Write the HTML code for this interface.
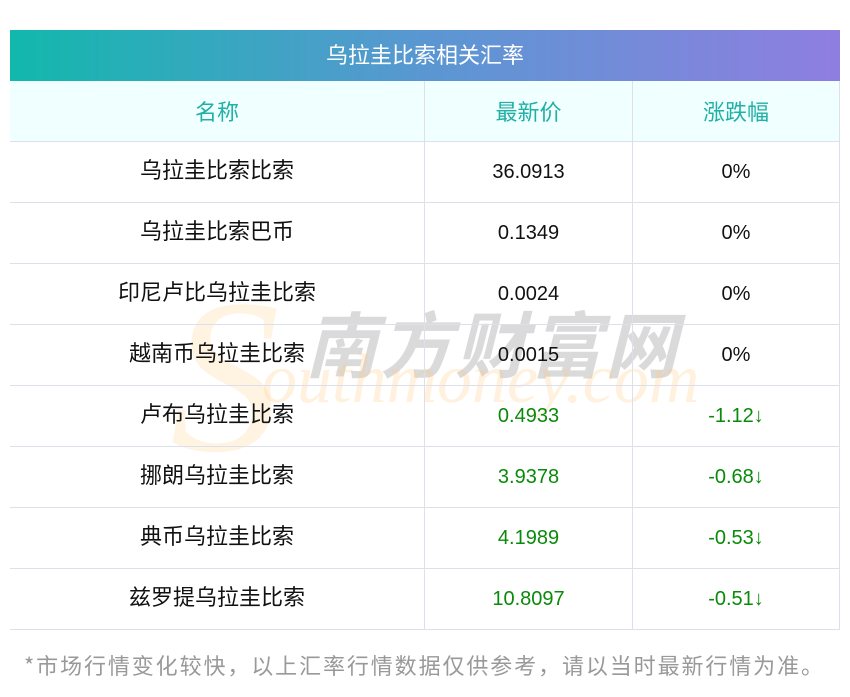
<!DOCTYPE html>
<html><head><meta charset="utf-8"><style>
body{margin:0;width:850px;height:697px;background:#fff;font-family:"Liberation Sans","Noto Sans CJK SC",sans-serif;position:relative;overflow:hidden}
.title{position:absolute;left:10px;top:30px;width:830px;height:51px;background:linear-gradient(90deg,#12b8ac,#5a97d2,#8f7ee0);color:#fff;font-size:22px;text-align:center;line-height:48px;font-family:"Noto Sans CJK SC",sans-serif}
table{position:absolute;left:10px;top:81px;width:830px;border-collapse:collapse;font-size:20px}
td{height:60px;border:1px solid #dde0ea;text-align:center;padding:0;color:#111;line-height:1}
td.c{font-family:"Noto Sans CJK SC",sans-serif;font-size:22px}
td.c span{position:relative;top:-3px}
tr.h td{background:#f0ffff;color:#20b0a6;height:60px;font-family:"Noto Sans CJK SC",sans-serif;font-size:22px}
tr td:first-child{border-left:none;width:414px}
tr td:nth-child(2){width:207px}
tr.h td{border-top:none}
.g{color:#0a8a0a}
.foot{position:absolute;left:24px;top:650px;font-size:22px;color:#999;font-family:"Noto Sans CJK SC",sans-serif;letter-spacing:1.9px;line-height:30px}
.wm1{position:absolute;left:305px;top:288px;font-size:72px;color:rgba(150,150,150,.35);letter-spacing:3px;font-family:"Noto Sans CJK SC",sans-serif;font-weight:bold;font-style:italic}
.wm2{position:absolute;left:262px;top:340px;font-size:70px;font-style:italic;color:rgba(255,200,120,.25);font-family:"Liberation Serif",serif}
.wmS{position:absolute;left:170px;top:250px;font-size:220px;font-style:italic;color:rgba(255,200,120,.22);font-family:"Liberation Serif",serif}
</style></head><body>
<div class="title">乌拉圭比索相关汇率</div>
<div class="wmS">S</div>
<div class="wm1">南方财富网</div>
<div class="wm2">outhmoney.com</div>
<table>
<tr class="h"><td>名称</td><td>最新价</td><td>涨跌幅</td></tr>
<tr><td class="c"><span>乌拉圭比索比索</span></td><td>36.0913</td><td>0%</td></tr>
<tr><td class="c"><span>乌拉圭比索巴币</span></td><td>0.1349</td><td>0%</td></tr>
<tr><td class="c"><span>印尼卢比乌拉圭比索</span></td><td>0.0024</td><td>0%</td></tr>
<tr><td class="c"><span>越南币乌拉圭比索</span></td><td>0.0015</td><td>0%</td></tr>
<tr><td class="c"><span>卢布乌拉圭比索</span></td><td class="g">0.4933</td><td class="g">-1.12↓</td></tr>
<tr><td class="c"><span>挪朗乌拉圭比索</span></td><td class="g">3.9378</td><td class="g">-0.68↓</td></tr>
<tr><td class="c"><span>典币乌拉圭比索</span></td><td class="g">4.1989</td><td class="g">-0.53↓</td></tr>
<tr><td class="c"><span>兹罗提乌拉圭比索</span></td><td class="g">10.8097</td><td class="g">-0.51↓</td></tr>
</table>
<div class="foot">*市场行情变化较快，以上汇率行情数据仅供参考，请以当时最新行情为准。</div>
</body></html>
